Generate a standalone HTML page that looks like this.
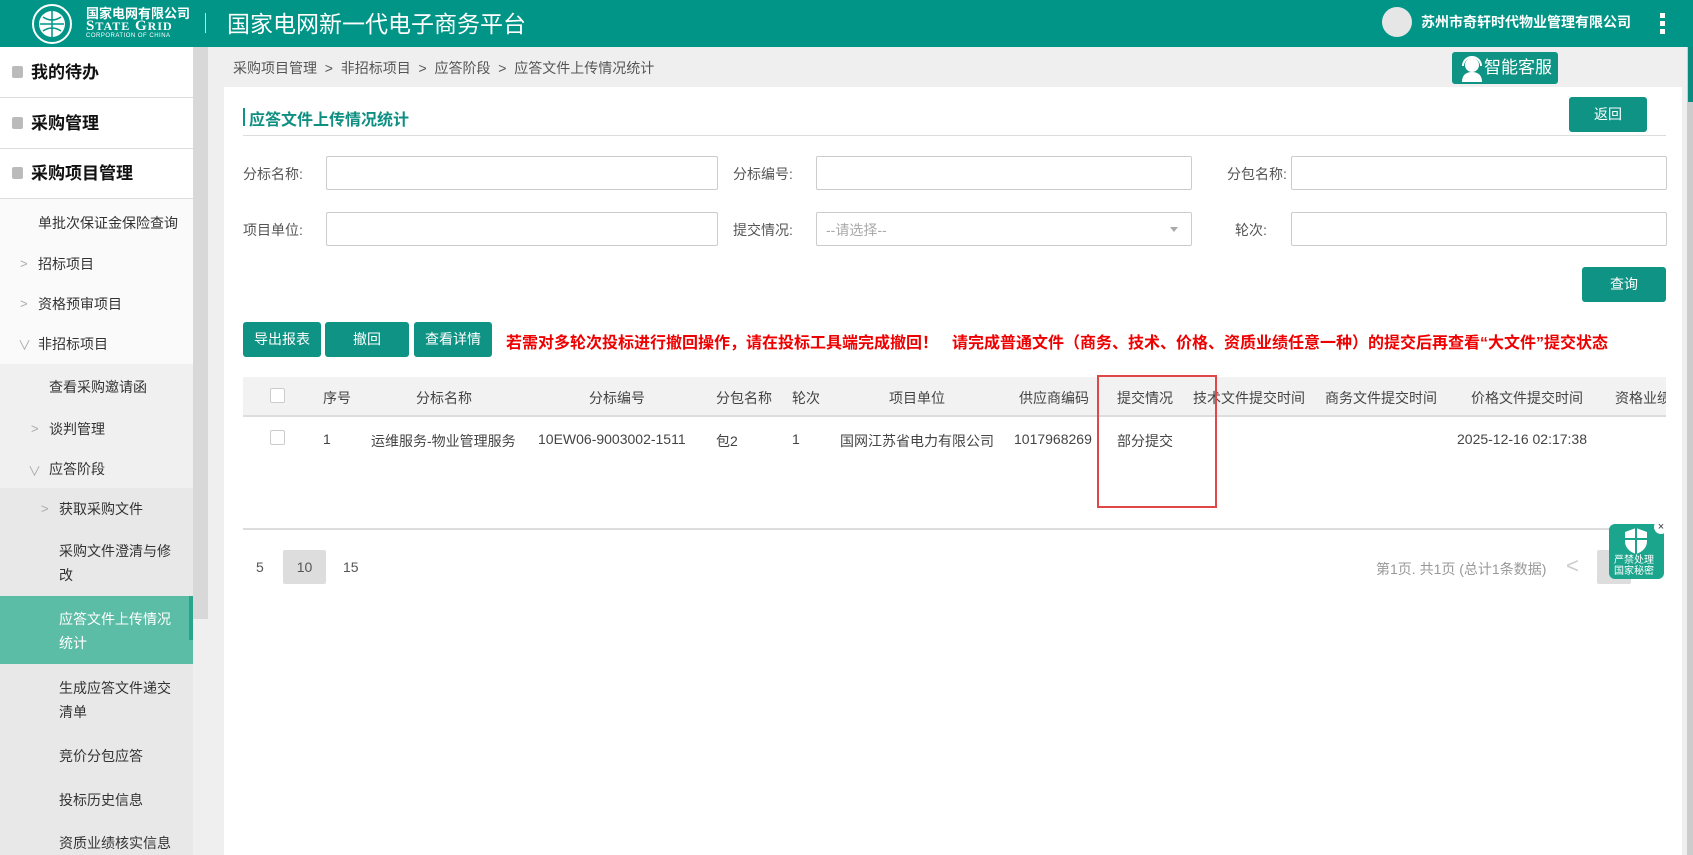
<!DOCTYPE html>
<html><head><meta charset="utf-8"><style>
*{box-sizing:border-box;margin:0;padding:0}
body{width:1693px;height:855px;overflow:hidden;background:#efefef;font-family:"Liberation Sans","Noto Sans CJK SC",sans-serif;font-size:14px;color:#333;position:relative}
.a{position:absolute;white-space:nowrap}
.hdr{left:0;top:0;width:1693px;height:47px;background:#009587}
.sb{left:0;top:47px;width:193px;height:808px;background:#fff}
.top{left:0;width:193px;height:51px;border-bottom:1px solid #ddd;font-size:17px;font-weight:bold;color:#111;line-height:51px;padding-left:31px}
.top:before{content:"";position:absolute;left:12px;top:19px;width:11px;height:12px;background:#bbb;border-radius:2px}
.it{color:#333;font-size:14px}
.btn{background:#0f9384;color:#fff;border-radius:3px;text-align:center;font-size:14px}
.inp{background:#fff;border:1px solid #ccc;border-radius:2px;height:34px}
.lbl{color:#555;font-size:14px}
.th{color:#444;font-size:14px;top:388px}
.td{color:#444;font-size:14px;top:431px}
.chev{color:#aaa;font-size:13px}
</style></head><body>
<div class="a hdr"></div>
<svg class="a" style="left:31px;top:3px" width="42" height="42" viewBox="0 0 42 42"><circle cx="21" cy="21" r="19" fill="none" stroke="#fff" stroke-width="2"/><circle cx="21" cy="21" r="13" fill="#fff"/><path d="M9 21h24M21 8v26M12 14c6 4 12 4 18 0M12 28c6-4 12-4 18 0" stroke="#009587" stroke-width="1.5" fill="none"/></svg>
<div class="a" style="left:86px;top:3px;color:#fff;font-size:13px;font-weight:bold">国家电网有限公司</div>
<div class="a" style="left:86px;top:18px;color:#fff;font-size:15px;font-weight:bold;font-family:'Liberation Serif',serif;letter-spacing:1px">S<span style="font-size:12px">TATE</span> G<span style="font-size:12px">RID</span></div>
<div class="a" style="left:86px;top:33px;color:#fff;font-size:6px;letter-spacing:.5px">CORPORATION OF CHINA</div>
<div class="a" style="left:205px;top:13px;width:1px;height:20px;background:#cde"></div>
<div class="a" style="left:227px;top:5px;color:#fff;font-size:23px">国家电网新一代电子商务平台</div>
<div class="a" style="left:1382px;top:7px;width:30px;height:30px;border-radius:50%;background:#e6e6e6"></div>
<div class="a" style="left:1421px;top:12px;color:#fff;font-size:14px;font-weight:bold">苏州市奇轩时代物业管理有限公司</div>
<div class="a" style="left:1660px;top:13px;width:5px;height:5px;background:#fff"></div>
<div class="a" style="left:1660px;top:21px;width:5px;height:5px;background:#fff"></div>
<div class="a" style="left:1660px;top:29px;width:5px;height:5px;background:#fff"></div>
<div class="a" style="left:1687px;top:47px;width:6px;height:808px;background:#ccc"></div>
<div class="a" style="left:1688px;top:47px;width:5px;height:55px;background:#0a8d80"></div>

<div class="a sb"></div>
<div class="a" style="left:0;top:199px;width:193px;height:165px;background:#fafafa"></div>
<div class="a" style="left:0;top:364px;width:193px;height:124px;background:#f0f0f0"></div>
<div class="a" style="left:0;top:488px;width:193px;height:367px;background:#e8e8e8"></div>
<div class="a" style="left:193px;top:47px;width:15px;height:572px;background:#d8d8d8"></div>
<div class="a top" style="top:47px">我的待办</div>
<div class="a top" style="top:98px">采购管理</div>
<div class="a top" style="top:148px">采购项目管理</div>
<div class="a it" style="left:38px;top:213px">单批次保证金保险查询</div>
<div class="a chev" style="left:20px;top:256px">&gt;</div><div class="a it" style="left:38px;top:254px">招标项目</div>
<div class="a chev" style="left:20px;top:296px">&gt;</div><div class="a it" style="left:38px;top:294px">资格预审项目</div>
<div class="a chev" style="left:18px;top:335px">∨</div><div class="a it" style="left:38px;top:334px">非招标项目</div>
<div class="a it" style="left:49px;top:377px">查看采购邀请函</div>
<div class="a chev" style="left:31px;top:421px">&gt;</div><div class="a it" style="left:49px;top:419px">谈判管理</div>
<div class="a chev" style="left:28px;top:461px">∨</div><div class="a it" style="left:49px;top:459px">应答阶段</div>
<div class="a chev" style="left:41px;top:501px">&gt;</div><div class="a it" style="left:59px;top:499px">获取采购文件</div>
<div class="a it" style="left:59px;top:541px">采购文件澄清与修</div>
<div class="a it" style="left:59px;top:565px">改</div>
<div class="a" style="left:0;top:596px;width:193px;height:68px;background:#5cbda6"></div>
<div class="a" style="left:189px;top:596px;width:4px;height:44px;background:#2aa48a"></div>
<div class="a it" style="left:59px;top:609px;color:#fff">应答文件上传情况</div>
<div class="a it" style="left:59px;top:633px;color:#fff">统计</div>
<div class="a it" style="left:59px;top:678px">生成应答文件递交</div>
<div class="a it" style="left:59px;top:702px">清单</div>
<div class="a it" style="left:59px;top:746px">竞价分包应答</div>
<div class="a it" style="left:59px;top:790px">投标历史信息</div>
<div class="a it" style="left:59px;top:833px">资质业绩核实信息</div>

<div class="a" style="left:233px;top:58px;color:#555;font-size:14px">采购项目管理 &nbsp;&gt;&nbsp; 非招标项目 &nbsp;&gt;&nbsp; 应答阶段 &nbsp;&gt;&nbsp; 应答文件上传情况统计</div>
<div class="a btn" style="left:1452px;top:52px;width:106px;height:32px;font-size:17px;line-height:32px;padding-left:26px">智能客服</div>
<svg class="a" style="left:1458px;top:54px" width="28" height="28" viewBox="0 0 28 28"><circle cx="14" cy="11" r="7" fill="#fff"/><path d="M4 28c0-7 4-10 10-10s10 3 10 10z" fill="#fff"/><path d="M5 12a9 9 0 0 1 18 0" stroke="#fff" stroke-width="2" fill="none"/></svg>
<div class="a" style="left:224px;top:87px;width:1458px;height:768px;background:#fff"></div>
<div class="a" style="left:243px;top:108px;width:2px;height:18px;background:#0f9384"></div>
<div class="a" style="left:249px;top:106px;color:#0f8f82;font-size:16px;font-weight:bold">应答文件上传情况统计</div>
<div class="a" style="left:243px;top:135px;width:1423px;height:1px;background:#ddd"></div>
<div class="a btn" style="left:1569px;top:97px;width:78px;height:35px;line-height:35px">返回</div>

<div class="a lbl" style="left:243px;top:164px">分标名称:</div><div class="a inp" style="left:326px;top:156px;width:392px"></div>
<div class="a lbl" style="left:733px;top:164px">分标编号:</div><div class="a inp" style="left:816px;top:156px;width:376px"></div>
<div class="a lbl" style="left:1227px;top:164px">分包名称:</div><div class="a inp" style="left:1291px;top:156px;width:376px"></div>
<div class="a lbl" style="left:243px;top:220px">项目单位:</div><div class="a inp" style="left:326px;top:212px;width:392px"></div>
<div class="a lbl" style="left:733px;top:220px">提交情况:</div><div class="a inp" style="left:816px;top:212px;width:376px"></div>
<div class="a" style="left:826px;top:220px;color:#aaa;font-size:14px">--请选择--</div>
<div class="a" style="left:1170px;top:227px;border-left:4px solid transparent;border-right:4px solid transparent;border-top:5px solid #aaa"></div>
<div class="a lbl" style="left:1235px;top:220px">轮次:</div><div class="a inp" style="left:1291px;top:212px;width:376px"></div>
<div class="a btn" style="left:1582px;top:267px;width:84px;height:35px;line-height:35px">查询</div>

<div class="a btn" style="left:243px;top:322px;width:78px;height:35px;line-height:35px">导出报表</div>
<div class="a btn" style="left:325px;top:322px;width:84px;height:35px;line-height:35px">撤回</div>
<div class="a btn" style="left:414px;top:322px;width:78px;height:35px;line-height:35px">查看详情</div>
<div class="a" style="left:506px;top:329px;color:#e00;font-size:16px;font-weight:bold">若需对多轮次投标进行撤回操作，请在投标工具端完成撤回！</div>
<div class="a" style="left:952px;top:329px;color:#e00;font-size:16px;font-weight:bold">请完成普通文件（商务、技术、价格、资质业绩任意一种）的提交后再查看“大文件”提交状态</div>

<div class="a" style="left:243px;top:377px;width:1423px;height:40px;background:#f2f2f2;border-bottom:2px solid #ddd"></div>
<div class="a" style="left:270px;top:388px;width:15px;height:15px;border:1px solid #ccc;background:#fff;border-radius:2px"></div>
<div class="a th" style="left:323px">序号</div>
<div class="a th" style="left:416px">分标名称</div>
<div class="a th" style="left:589px">分标编号</div>
<div class="a th" style="left:716px">分包名称</div>
<div class="a th" style="left:792px">轮次</div>
<div class="a th" style="left:889px">项目单位</div>
<div class="a th" style="left:1019px">供应商编码</div>
<div class="a th" style="left:1117px">提交情况</div>
<div class="a th" style="left:1193px">技术文件提交时间</div>
<div class="a th" style="left:1325px">商务文件提交时间</div>
<div class="a th" style="left:1471px">价格文件提交时间</div>
<div class="a th" style="left:1615px;width:51px;overflow:hidden">资格业绩</div>
<div class="a" style="left:270px;top:430px;width:15px;height:15px;border:1px solid #ccc;background:#fff;border-radius:2px"></div>
<div class="a td" style="left:323px">1</div>
<div class="a td" style="left:371px">运维服务-物业管理服务</div>
<div class="a td" style="left:538px">10EW06-9003002-1511</div>
<div class="a td" style="left:716px">包2</div>
<div class="a td" style="left:792px">1</div>
<div class="a td" style="left:840px">国网江苏省电力有限公司</div>
<div class="a td" style="left:1014px">1017968269</div>
<div class="a td" style="left:1117px">部分提交</div>
<div class="a td" style="left:1457px">2025-12-16 02:17:38</div>
<div class="a" style="left:1097px;top:375px;width:120px;height:133px;border:2px solid #e04848"></div>
<div class="a" style="left:243px;top:528px;width:1423px;height:2px;background:#ddd"></div>

<div class="a" style="left:256px;top:559px;color:#555">5</div>
<div class="a" style="left:283px;top:550px;width:43px;height:34px;background:#ddd;border-radius:2px;text-align:center;line-height:34px;color:#555">10</div>
<div class="a" style="left:343px;top:559px;color:#555">15</div>
<div class="a" style="left:1376px;top:559px;color:#999">第1页. 共1页 (总计1条数据)</div>
<div class="a" style="left:1566px;top:553px;color:#ccc;font-size:22px">&lt;</div>
<div class="a" style="left:1597px;top:550px;width:34px;height:34px;background:#ddd;border-radius:2px"></div>
<div class="a" style="left:1609px;top:524px;width:55px;height:55px;background:#1aa58c;border-radius:6px"></div>
<svg class="a" style="left:1621px;top:526px" width="30" height="30" viewBox="0 0 30 30"><path d="M15 2l11 4v9c0 7-5 11-11 13C9 26 4 22 4 15V6z" fill="#fff"/><path d="M15 2v26M4 13h22" stroke="#1aa58c" stroke-width="2"/></svg>
<div class="a" style="left:1614px;top:555px;color:#fff;font-size:10px;line-height:11px">严禁处理<br>国家秘密</div>
<div class="a" style="left:1654px;top:520px;width:14px;height:14px;border-radius:50%;background:#fff;color:#333;font-size:11px;line-height:14px;text-align:center">×</div>
</body></html>
